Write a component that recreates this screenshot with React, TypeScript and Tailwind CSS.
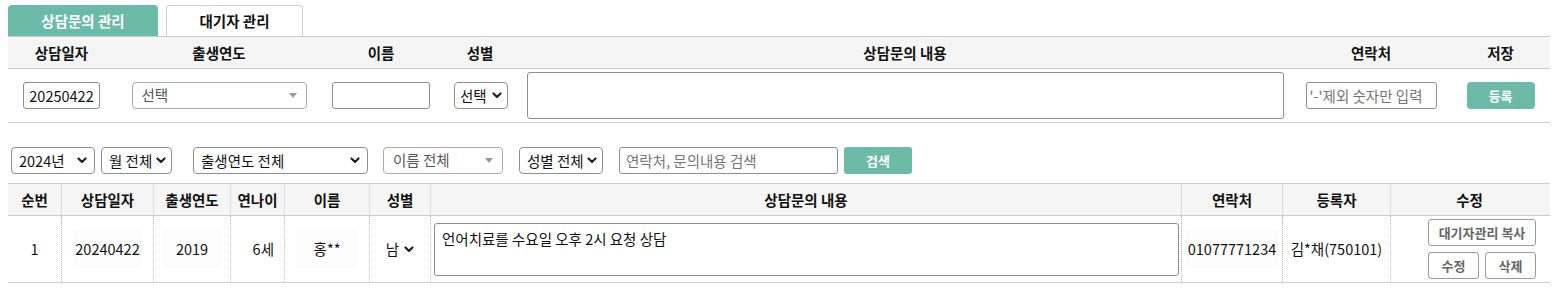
import React from 'react';

const teal = 'bg-[#6cbaa8]';

const Chevron: React.FC = () => (
  <svg width="10" height="7" viewBox="0 0 10 7" className="shrink-0">
    <path d="M1.5 1.5l3.5 3.5 3.5-3.5" fill="none" stroke="#222" strokeWidth={2.2} strokeLinecap="round" strokeLinejoin="round" />
  </svg>
);

const Caret: React.FC = () => (
  <svg width="8" height="5" viewBox="0 0 8 5" className="shrink-0">
    <path d="M0 0h8L4 5z" fill="#999" />
  </svg>
);

const NativeSelect: React.FC<{ label: string; className: string }> = ({ label, className }) => (
  <div className={`flex items-center justify-between h-[27px] border border-[#8f8f8f] rounded-[4px] bg-white pl-[7px] pr-[7px] text-[#111] whitespace-nowrap ${className}`}>
    <span>{label}</span>
    <Chevron />
  </div>
);

const Select2: React.FC<{ label: string; className: string }> = ({ label, className }) => (
  <div className={`flex items-center justify-between h-[27px] border border-[#aaa] rounded-[4px] bg-white pl-[9px] pr-[9px] text-[#555] ${className}`}>
    <span className="-mt-[2px]">{label}</span>
    <Caret />
  </div>
);

const topHead = ['상담일자', '출생연도', '이름', '성별', '상담문의 내용', '연락처', '저장'];
const listHead = ['순번', '상담일자', '출생연도', '연나이', '이름', '성별', '상담문의 내용', '연락처', '등록자', '수정'];

const App: React.FC = () => {
  return (
    <div className="w-[1558px] h-[291px] bg-white px-2 pt-[5px] text-[14.5px] text-[#111]" style={{ fontFamily: '"Noto Sans CJK KR", "Noto Sans", sans-serif' }}>
      {/* tabs */}
      <div className="flex gap-2 h-[31px]">
        <div className={`w-[150px] ${teal} rounded-t-[4px] flex items-center justify-center text-white font-bold`}>상담문의 관리</div>
        <div className="w-[137px] border border-b-0 border-[#ccc] rounded-t-[4px] flex items-center justify-center font-bold">대기자 관리</div>
      </div>

      {/* register table */}
      <div className="border-t border-[#ccc]">
        <div className="grid grid-cols-[107px_208px_116px_82px_768px_164px_95px] h-[32px] bg-[#f5f5f5] border-b border-[#ccc] font-bold">
          {topHead.map((h) => (
            <div key={h} className="flex items-center justify-center">{h}</div>
          ))}
        </div>
        <div className="grid grid-cols-[107px_208px_116px_82px_768px_164px_95px] h-[54px] border-b border-[#ccc] items-center">
          <div className="flex justify-center">
            <div className="w-[77px] h-[27px] border border-[#8f8f8f] rounded-[3px] flex items-center justify-center">20250422</div>
          </div>
          <div className="flex justify-center">
            <Select2 label="선택" className="w-[175px]" />
          </div>
          <div className="flex justify-center">
            <div className="w-[98px] h-[27px] border border-[#8f8f8f] rounded-[3px]" />
          </div>
          <div className="flex justify-center pl-[2px]">
            <NativeSelect label="선택" className="w-[54px] !pl-[5px] !pr-[5px]" />
          </div>
          <div className="flex justify-center">
            <div className="w-[757px] h-[47px] border border-[#8f8f8f] rounded-[3px]" />
          </div>
          <div className="flex justify-center">
            <div className="w-[131px] h-[27px] border border-[#8f8f8f] rounded-[3px] flex items-center pl-[3px] text-[#757575] whitespace-nowrap overflow-hidden">'-'제외 숫자만 입력</div>
          </div>
          <div className="flex justify-center">
            <div className={`w-[68px] h-[27px] ${teal} rounded-[4px] flex items-center justify-center text-white font-bold text-[13px]`}>등록</div>
          </div>
        </div>
      </div>

      {/* search bar */}
      <div className="flex items-center mt-[24px] ml-[3px] h-[27px]">
        <NativeSelect label="2024년" className="w-[84px]" />
        <NativeSelect label="월 전체" className="w-[71px] ml-[6px] !pr-[5px]" />
        <NativeSelect label="출생연도 전체" className="w-[175px] ml-[21px]" />
        <Select2 label="이름 전체" className="w-[120px] ml-[15px]" />
        <NativeSelect label="성별 전체" className="w-[84px] ml-[16px] !pr-[5px]" />
        <div className="w-[219px] h-[27px] ml-[16px] border border-[#8f8f8f] rounded-[3px] flex items-center pl-[6px] text-[#757575]">연락처, 문의내용 검색</div>
        <div className={`w-[68px] h-[27px] ml-[6px] ${teal} rounded-[3px] flex items-center justify-center text-white font-bold text-[13px]`}>검색</div>
      </div>

      {/* list table */}
      <div className="mt-[9px] border-t border-[#ccc]">
        <div className="grid grid-cols-[53px_92px_77px_54px_85px_61px_751px_101px_108px_158px] h-[32px] bg-[#f5f5f5] border-b border-[#ccc] font-bold">
          {listHead.map((h, i) => (
            <div key={h + i} className={`flex items-center justify-center ${i > 0 ? 'border-l border-[#ddd]' : ''}`}>{h}</div>
          ))}
        </div>
        <div className="grid grid-cols-[53px_92px_77px_54px_85px_61px_751px_101px_108px_158px] h-[67px] border-b border-[#ccc]">
          <div className="flex items-center justify-center">1</div>
          <div className="flex items-center justify-center border-l border-dotted border-[#bbb]">
            <span className="bg-[#fcfcfc] px-[2px] py-[8px]">20240422</span>
          </div>
          <div className="flex items-center justify-center border-l border-dotted border-[#bbb]">
            <span className="bg-[#fcfcfc] px-[14px] py-[8px]">2019</span>
          </div>
          <div className="flex items-center justify-end pr-[10px] border-l border-dotted border-[#bbb]">6세</div>
          <div className="flex items-center justify-center border-l border-dotted border-[#bbb]">
            <span className="bg-[#fcfcfc] px-[18px] py-[8px]">홍**</span>
          </div>
          <div className="flex items-center justify-center gap-[5px] border-l border-dotted border-[#bbb]">
            <span>남</span>
            <Chevron />
          </div>
          <div className="flex items-center pl-[3px] border-l border-dotted border-[#bbb]">
            <div className="w-[745px] h-[53px] border border-[#8f8f8f] rounded-[3px] pl-[7px] pt-[5px] leading-[20px]">언어치료를 수요일 오후 2시 요청 상담</div>
          </div>
          <div className="flex items-center justify-center border-l border-dotted border-[#bbb]">
            <span className="bg-[#fcfcfc] px-[3px] py-[8px]">01077771234</span>
          </div>
          <div className="flex items-center justify-center border-l border-dotted border-[#bbb]">김*채(750101)</div>
          <div className="flex flex-col items-end justify-center gap-[6px] pr-[12px] border-l border-dotted border-[#bbb]">
            <div className="w-[108px] h-[27px] border border-[#999] rounded-[3px] flex items-center justify-center text-[13px] font-bold text-[#666]">대기자관리 복사</div>
            <div className="flex gap-[6px]">
              <div className="w-[51px] h-[27px] border border-[#999] rounded-[3px] flex items-center justify-center text-[13px] font-bold text-[#666]">수정</div>
              <div className="w-[51px] h-[27px] border border-[#999] rounded-[3px] flex items-center justify-center text-[13px] font-bold text-[#666]">삭제</div>
            </div>
          </div>
        </div>
      </div>
    </div>
  );
};

export default App;
